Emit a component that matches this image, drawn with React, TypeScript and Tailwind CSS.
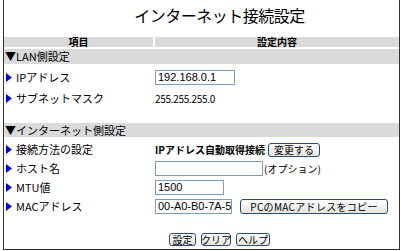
import React from "react";

const jp = { fontFamily: '"MS PGothic", "Noto Sans CJK JP", sans-serif' };

function Tri() {
  return (
    <svg width="6" height="9" viewBox="0 0 6 9" className="shrink-0">
      <polygon points="0,0 6,4.5 0,9" fill="#0000e0" />
    </svg>
  );
}

function Label({ text }: { text: string }) {
  return (
    <div className="flex items-center gap-[4px] pl-[2px] text-[11px] leading-[15px] text-black whitespace-nowrap">
      <Tri />
      <span>{text}</span>
    </div>
  );
}

function Btn({ children, className = "" }: { children: React.ReactNode; className?: string }) {
  return (
    <button
      className={
        "flex items-center justify-center whitespace-nowrap p-0 rounded-[3px] border border-[#2d4a72] bg-gradient-to-b from-white to-[#e4e4dc] text-[10px] leading-[11px] text-black " +
        className
      }
    >
      {children}
    </button>
  );
}

export default function App() {
  return (
    <div className="w-[401px] h-[251px] bg-white" style={jp}>
      <div className="ml-[3px] w-[397px] h-[250px] border-l border-r border-b border-[#333333] flex flex-col">
        <div className="h-[37px] flex justify-center pt-[5px] pl-[36px]">
          <span className="text-[16px] leading-[20px] text-black tracking-[-0.5px]">インターネット接続設定</span>
        </div>
        <div className="grid grid-cols-[149px_1fr] gap-x-[2px] h-[10px]">
          <div className="bg-[#dadada] text-center text-[10px] leading-[10px] font-bold">項目</div>
          <div className="bg-[#dadada] text-center text-[10px] leading-[10px] font-bold">設定内容</div>
        </div>
        <div className="mt-[2px] h-[15px] bg-[#dadada] pl-[1px] text-[11px] leading-[15px]">▼LAN側設定</div>

        <div className="grid grid-cols-[151px_1fr] mt-[6px] h-[15px]">
          <Label text="IPアドレス" />
          <div className="flex items-center">
            <div className="w-[80px] h-[15px] border border-[#7f9db9] px-[2px] text-[11px] leading-[13px] font-['Liberation_Sans',sans-serif]">
              192.168.0.1
            </div>
          </div>
        </div>
        <div className="grid grid-cols-[151px_1fr] mt-[6px] h-[15px]">
          <Label text="サブネットマスク" />
          <div className="flex items-center text-[10px] leading-[15px] tracking-[-0.3px]">255.255.255.0</div>
        </div>

        <div className="mt-[17px] h-[14px] bg-[#dadada] pl-[1px] text-[11px] leading-[14px]">▼インターネット側設定</div>

        <div className="grid grid-cols-[151px_1fr] mt-[5px] h-[14px]">
          <Label text="接続方法の設定" />
          <div className="flex items-center gap-[3px]">
            <span className="text-[10px] leading-[14px] font-bold">IPアドレス自動取得接続</span>
            <Btn className="w-[52px] h-[14px]">変更する</Btn>
          </div>
        </div>
        <div className="grid grid-cols-[151px_1fr] mt-[5px] h-[15px]">
          <Label text="ホスト名" />
          <div className="flex items-center gap-[1px]">
            <div className="w-[108px] h-[15px] border border-[#7f9db9]" />
            <span className="text-[10px] leading-[15px]">(オプション)</span>
          </div>
        </div>
        <div className="grid grid-cols-[151px_1fr] mt-[4px] h-[15px]">
          <Label text="MTU値" />
          <div className="flex items-center">
            <div className="w-[69px] h-[15px] border border-[#7f9db9] px-[2px] text-[11px] leading-[13px] font-['Liberation_Sans',sans-serif]">
              1500
            </div>
          </div>
        </div>
        <div className="grid grid-cols-[151px_1fr] mt-[4px] h-[15px]">
          <Label text="MACアドレス" />
          <div className="flex items-center gap-[8px]">
            <div className="w-[77px] h-[15px] border border-[#7f9db9] pl-[2px] text-[11px] leading-[13px] overflow-hidden whitespace-nowrap font-['Liberation_Sans',sans-serif]">
              00-A0-B0-7A-50
            </div>
            <Btn className="w-[148px] h-[15px] tracking-[0.3px]">PCのMACアドレスをコピー</Btn>
          </div>
        </div>

        <div className="mt-[19px] flex gap-[5px] pl-[165px]">
          <Btn className="w-[27px] h-[13px]">設定</Btn>
          <Btn className="w-[30px] h-[13px]">クリア</Btn>
          <Btn className="w-[34px] h-[13px]">ヘルプ</Btn>
        </div>
      </div>
    </div>
  );
}
